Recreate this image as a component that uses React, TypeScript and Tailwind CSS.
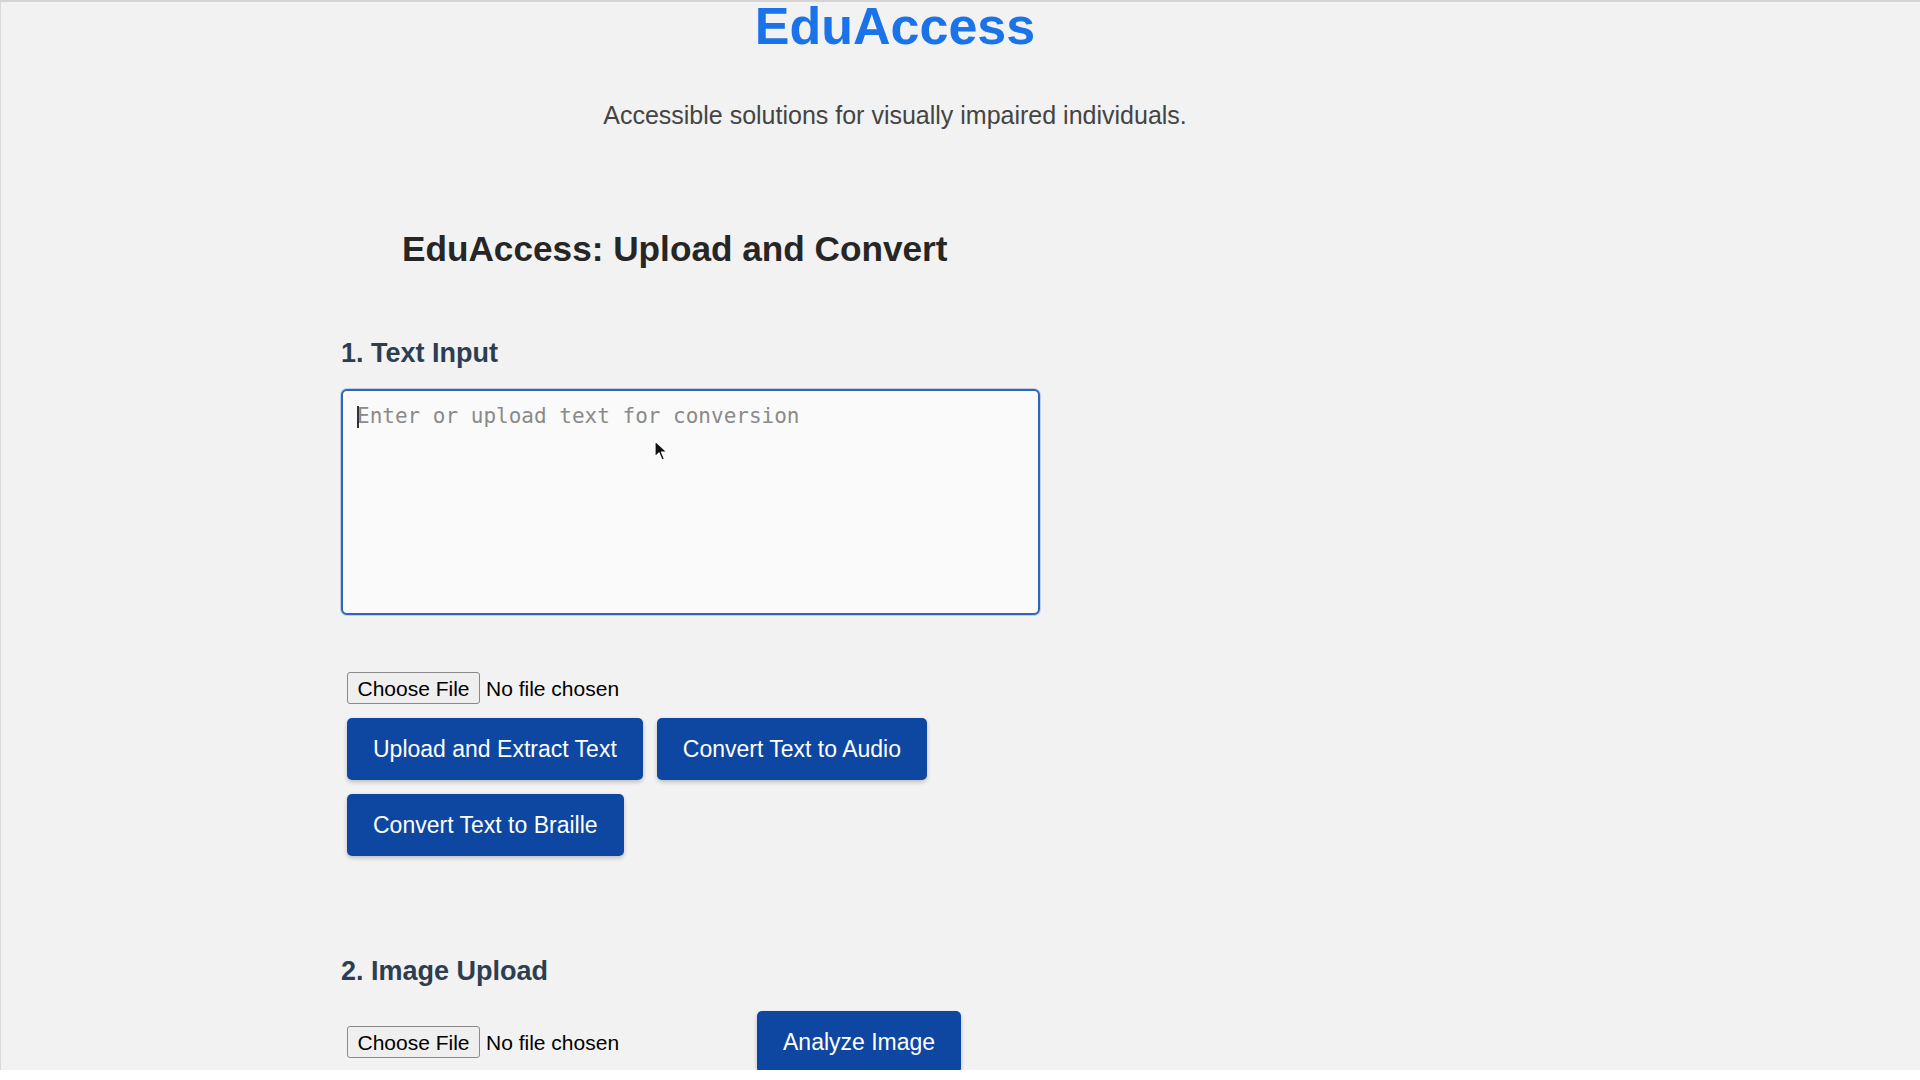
import React from "react";

const sans = "font-['Liberation_Sans',Arial,Helvetica,sans-serif]";

function FileField({ className = "" }: { className?: string }) {
  return (
    <label className={`flex items-center text-[21px] text-black cursor-pointer ${className}`}>
      <input type="file" className="hidden" />
      <span className="h-[32px] w-[133px] flex items-center justify-center bg-[#efefef] border border-[#8a8a8a] rounded-[3px] leading-none">
        Choose File
      </span>
      <span className="ml-[6px] leading-none">No file chosen</span>
    </label>
  );
}

function ActionButton({ label }: { label: string }) {
  return (
    <button className="h-[62px] px-[26px] bg-[#0d47a1] text-white text-[23px] leading-none rounded-[5px] shadow-[0_2px_4px_rgba(0,0,0,0.22)]">
      {label}
    </button>
  );
}

export default function App() {
  return (
    <div className={`h-[1080px] bg-white overflow-hidden ${sans}`}>
      <div className="h-[1070px] bg-[#f2f2f2] border-t-2 border-t-[#d4d4d4] border-l border-l-[#dadada] overflow-hidden">
        {/* Header */}
        <header className="w-[1788px] text-center">
          <h1 className="text-[52px] leading-[48px] font-bold text-[#1a73e8]">EduAccess</h1>
          <p className="mt-[50px] text-[25px] leading-[30px] text-[#444]">
            Accessible solutions for visually impaired individuals.
          </p>
        </header>

        <main className="pl-[340px]">
          <h2 className="mt-[98px] ml-[61px] text-[35.2px] leading-[42px] font-bold text-[#262626]">
            EduAccess: Upload and Convert
          </h2>

          {/* Section 1 */}
          <section>
            <h3 className="mt-[68px] text-[27px] leading-[30px] font-bold text-[#2c3e50]">1. Text Input</h3>
            <div className="relative mt-[21px] w-[699px] h-[226px]">
              <textarea
                placeholder="Enter or upload text for conversion"
                className="w-full h-full resize-none bg-[#fafafa] border-2 border-[#2b67b6] rounded-[6px] pt-[12px] px-[14px] font-['DejaVu_Sans_Mono',monospace] text-[21px] leading-[26px] text-[#333] placeholder:text-[#8a8a8a] outline-none shadow-[0_0_0_1px_rgba(43,103,182,0.25)]"
              />
              {/* caret */}
              <span className="absolute left-[16px] top-[17px] w-[2px] h-[22px] bg-[#333]" />
              {/* mouse pointer */}
              <svg className="absolute left-[313px] top-[51px]" width="14" height="22" viewBox="0 0 14 22">
                <path d="M1 1 L1 17 L5 13 L8 20 L10.5 19 L7.5 12 L13 12 Z" fill="#111" stroke="#fff" strokeWidth="1.2" strokeLinejoin="round" />
              </svg>
            </div>

            <div className="ml-[6px]">
              <FileField className="mt-[57px]" />
              <div className="mt-[14px] flex gap-[14px]">
                <ActionButton label="Upload and Extract Text" />
                <ActionButton label="Convert Text to Audio" />
              </div>
              <div className="mt-[14px] flex">
                <ActionButton label="Convert Text to Braille" />
              </div>
            </div>
          </section>

          {/* Section 2 */}
          <section>
            <h3 className="mt-[100px] text-[27px] leading-[30px] font-bold text-[#2c3e50]">2. Image Upload</h3>
            <div className="mt-[25px] ml-[6px] flex items-center">
              <FileField className="w-[410px]" />
              <ActionButton label="Analyze Image" />
            </div>
          </section>
        </main>
      </div>
    </div>
  );
}
